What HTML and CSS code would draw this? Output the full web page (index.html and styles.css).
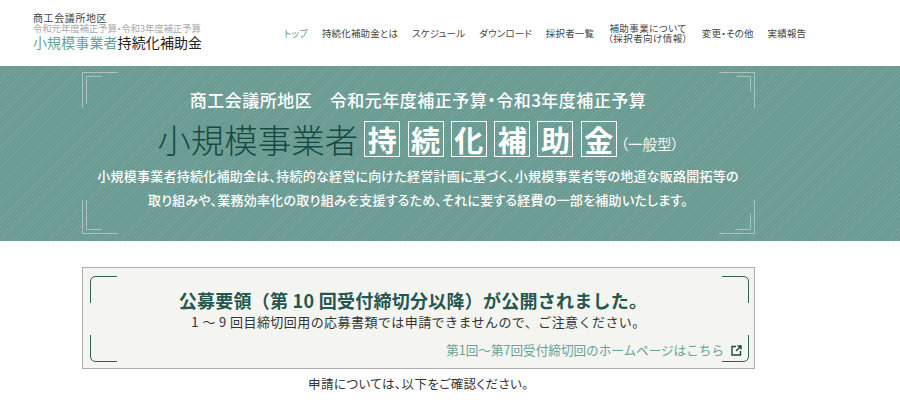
FILE: index.html
```html
<!DOCTYPE html>
<html lang="ja">
<head>
<meta charset="utf-8">
<title>小規模事業者持続化補助金</title>
<link rel="stylesheet" href="styles.css">
</head>
<body>
<header class="site-header">
  <a class="logo" href="#">
    <span class="logo-1">商工会議所地区</span>
    <span class="logo-2">令和元年度補正予算・令和3年度補正予算</span>
    <span class="logo-3"><span class="logo-green">小規模事業者</span>持続化補助金</span>
  </a>
  <nav class="nav">
    <a class="nav-item active" href="#">トップ</a>
    <a class="nav-item" href="#">持続化補助金とは</a>
    <a class="nav-item" href="#">スケジュール</a>
    <a class="nav-item" href="#">ダウンロード</a>
    <a class="nav-item" href="#">採択者一覧</a>
    <a class="nav-item two" href="#">補助事業について<br>（採択者向け情報）</a>
    <a class="nav-item" href="#">変更・その他</a>
    <a class="nav-item" href="#">実績報告</a>
  </nav>
</header>
<section class="hero">
  <svg class="hc hc-tl" width="36" height="36" viewBox="0 0 36 36"><path d="M.5 36V.5H36M4.500 32V4.500H20" fill="none" stroke="#fff" stroke-opacity=".4"/></svg>
  <svg class="hc hc-tr" width="36" height="36" viewBox="0 0 36 36"><path d="M0 .5H35.500V36M18 4.500H31.500V20" fill="none" stroke="#fff" stroke-opacity=".4"/></svg>
  <svg class="hc hc-bl" width="36" height="34" viewBox="0 0 36 34"><path d="M.5 0V33.500H36M4.500 0V29.500H20" fill="none" stroke="#fff" stroke-opacity=".4"/></svg>
  <svg class="hc hc-br" width="36" height="34" viewBox="0 0 36 34"><path d="M0 33.500H35.500V0M16 29.500H31.500V13" fill="none" stroke="#fff" stroke-opacity=".4"/></svg>
  <p class="hero-sub">商工会議所地区　令和元年度補正予算・令和3年度補正予算</p>
  <h1 class="hero-title">
    <span class="hero-dark">小規模事業者</span>
    <span class="boxes"><b>持</b><b>続</b><b>化</b><b>補</b><b>助</b><b>金</b></span>
    <span class="hero-type">（一般型）</span>
  </h1>
  <p class="hero-text">小規模事業者持続化補助金は、持続的な経営に向けた経営計画に基づく、小規模事業者等の地道な販路開拓等の<br>取り組みや、業務効率化の取り組みを支援するため、それに要する経費の一部を補助いたします。</p>
</section>
<main class="main">
  <div class="notice">
    <svg class="nc nc-tl" width="27" height="27" viewBox="0 0 27 27"><path d="M.5 27V6Q.5.5 6 .5H27" fill="none" stroke="#2f5f58"/></svg>
    <svg class="nc nc-tr" width="27" height="27" viewBox="0 0 27 27"><path d="M26.500 27V6Q26.500.5 21 .5H0" fill="none" stroke="#2f5f58"/></svg>
    <svg class="nc nc-bl" width="27" height="27" viewBox="0 0 27 27"><path d="M.5 0V21Q.5 26.500 6 26.500H27" fill="none" stroke="#2f5f58"/></svg>
    <svg class="nc nc-br" width="27" height="27" viewBox="0 0 27 27"><path d="M26.500 0V21Q26.500 26.500 21 26.500H0" fill="none" stroke="#2f5f58"/></svg>
    <h2 class="notice-title">公募要領（第 10 回受付締切分以降）が公開されました。</h2>
    <p class="notice-text">1 ～ 9 回目締切回用の応募書類では申請できませんので、ご注意ください。</p>
    <a class="notice-link" href="#">第1回～第7回受付締切回のホームページはこちら
      <svg class="ext" width="11" height="11" viewBox="0 0 11 11"><path d="M5 1.500H1V10H9.500V6M6.500 1H10V4.500M10 1L5 6" fill="none" stroke="#24443f" stroke-width="1.400"/></svg>
    </a>
  </div>
  <p class="after">申請については、以下をご確認ください。</p>
</main>
</body>
</html>
```
FILE: styles.css
```css
* { box-sizing: border-box; }
html, body { margin: 0; padding: 0; }
body {
  width: 900px;
  height: 414px;
  overflow: hidden;
  background: #fff;
  color: #333;
  font-family: "Noto Sans CJK JP", "Noto Sans", sans-serif;
}
a { color: inherit; text-decoration: none; }
p, h1, h2 { margin: 0; font-weight: normal; }

.site-header {
  height: 66px;
  display: flex;
  align-items: center;
  padding-left: 33px;
}
.logo {
  width: 251px;
  display: flex;
  flex-direction: column;
  margin-top: -4px;
}
.logo-1 { font-size: 10px; line-height: 11px; letter-spacing: .6px; color: #444; }
.logo-2 { font-size: 9.500px; line-height: 11px; color: #aaa; letter-spacing: -.2px; font-feature-settings: "palt"; }
.logo-3 { font-size: 14px; line-height: 17px; color: #222; letter-spacing: .1px; }
.logo-green { color: #68a197; }
.nav {
  display: flex;
  align-items: center;
  gap: 13.900px;
  font-size: 9.500px;
  line-height: 10.500px;
  color: #444;
  font-feature-settings: "palt";
  letter-spacing: .16px;
}
.nav-item { white-space: nowrap; display: block; }
.nav-item.active { color: #68a197; }
.nav-item.two { text-align: center; letter-spacing: .45px; }

.hero {
  position: relative;
  height: 175px;
  background-color: #6a9b92;
  background-image: repeating-linear-gradient(135deg, rgba(255,255,255,.08) 0, rgba(255,255,255,.08) 1px, transparent 1px, transparent 3px);
  display: flex;
  flex-direction: column;
  align-items: center;
  color: #fff;
  padding: 23px 64px 0 0;
}
.hc { position: absolute; }
.hc-tl { left: 82px; top: 6px; }
.hc-tr { left: 719px; top: 6px; }
.hc-bl { left: 82px; top: 134px; }
.hc-br { left: 719px; top: 134px; }
.hero-sub { font-size: 17px; line-height: 22px; font-weight: 500; font-feature-settings: "palt"; letter-spacing: .5px; }
.hero-title {
  display: flex;
  align-items: center;
  margin-top: 10px;
  height: 36px;
}
.hero-dark { font-size: 33.500px; line-height: 36px; color: #174a41; font-weight: 300; }
.boxes { display: flex; gap: 7.300px; margin-left: 6px; }
.boxes b {
  width: 36px;
  height: 36px;
  border: 1px solid #fff;
  display: flex;
  align-items: center;
  justify-content: center;
  font-size: 29px;
  font-weight: 700;
  line-height: 1;
}
.hero-type { font-size: 14.500px; margin: 8px 0 0 4px; color: #f2f7f5; font-feature-settings: "palt"; }
.hero-text {
  margin-top: 7px;
  font-size: 13px;
  line-height: 24px;
  text-align: center;
  font-weight: 500;
  font-feature-settings: "palt";
  letter-spacing: .25px;
}

.main { display: flex; flex-direction: column; align-items: flex-start; padding: 26px 0 0 82px; }
.notice {
  position: relative;
  width: 673px;
  height: 102px;
  background: #f4f5f1;
  border: 1.500px solid #adadad;
  text-align: center;
  padding-top: 19.500px;
}
.nc { position: absolute; }
.nc-tl { left: 6.500px; top: 7.500px; }
.nc-tr { right: 5px; top: 7.500px; }
.nc-bl { left: 6.500px; bottom: 6.500px; }
.nc-br { right: 5px; bottom: 6.500px; }
.notice-title { font-size: 18px; line-height: 24px; font-weight: 700; color: #24574f; margin-left: -11px; letter-spacing: .26px; }
.notice-text { font-size: 13px; line-height: 20px; color: #333; letter-spacing: .44px; }
.notice-link {
  position: absolute;
  right: 12px;
  bottom: 10px;
  display: flex;
  align-items: center;
  gap: 7px;
  font-size: 12.600px;
  line-height: 16px;
  color: #68a197;
}
.after { width: 673px; text-align: center; font-size: 12.500px; line-height: 20px; margin-top: 5px; color: #333; font-feature-settings: "palt"; letter-spacing: .4px; }
```
